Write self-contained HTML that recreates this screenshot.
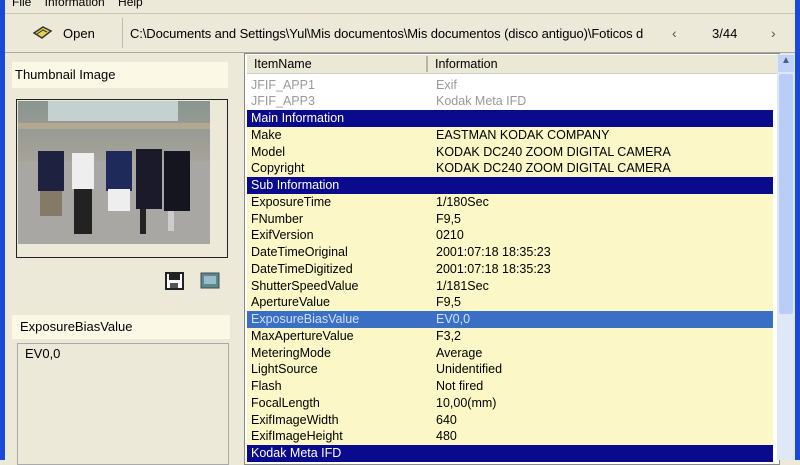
<!DOCTYPE html><html><head><style>
body{margin:0;width:800px;height:460px;overflow:hidden;background:#ece9d8;font-family:"Liberation Sans",sans-serif;font-size:12.5px;position:relative;color:#000}
.a{position:absolute}
.row{position:absolute;left:247px;width:526px;height:16.75px;line-height:16.75px;background:#fbf7c6}
.row span{position:absolute;left:4px}.row b{font-weight:normal;position:absolute;left:189px}
.g{background:#fff;color:#999}
.h{background:#0a0a8c;color:#fff}
.s{background:#3a6fc4;color:#cfe0ff}
</style></head><body>
<div class="a" style="left:0;top:0;width:5px;height:460px;background:#1c48d8"></div>
<div class="a" style="left:795px;top:0;width:5px;height:460px;background:#1c48d8"></div>
<div class="a" style="left:12px;top:-5px;font-size:12px">File &nbsp;&nbsp; Information &nbsp;&nbsp; Help</div>
<div class="a" style="left:5px;top:13px;width:790px;height:1px;background:#c9c5b2"></div>
<div class="a" style="left:5px;top:14px;width:790px;height:38px;background:#ece9d8;border-bottom:1px solid #aca899"></div>
<svg class="a" style="left:31px;top:24px" width="22" height="18"><path d="M3 9 L12 3 L20 7 L11 14 Z" fill="#e6d24a" stroke="#333" stroke-width="1.5"/><path d="M6 10 L12 6 L16 8" fill="none" stroke="#333"/></svg>
<div class="a" style="left:63px;top:26px;font-size:13px">Open</div>
<div class="a" style="left:122px;top:18px;width:1px;height:30px;background:#bbb"></div>
<div class="a" style="left:130px;top:26px;font-size:13px;white-space:nowrap;letter-spacing:-0.1px">C:\Documents and Settings\Yul\Mis documentos\Mis documentos (disco antiguo)\Foticos d</div>
<div class="a" style="left:672px;top:25px;font-size:14px;color:#555">‹</div>
<div class="a" style="left:712px;top:26px;font-size:13px">3/44</div>
<div class="a" style="left:771px;top:25px;font-size:14px;color:#555">›</div>
<div class="a" style="left:12px;top:62px;width:216px;height:26px;background:#fbf8e6"></div>
<div class="a" style="left:15px;top:67px;font-size:13px">Thumbnail Image</div>
<div class="a" style="left:16px;top:99px;width:210px;height:157px;border:1px solid #222;background:#ece9d8"></div>
<svg class="a" style="left:18px;top:101px" width="192" height="143"><defs><linearGradient id="g" x1="0" y1="0" x2="0" y2="1"><stop offset="0" stop-color="#8a9590"/><stop offset=".45" stop-color="#a8a49a"/><stop offset="1" stop-color="#9a9a96"/></linearGradient></defs><rect width="192" height="143" fill="url(#g)"/><rect x="30" y="0" width="130" height="20" fill="#c5d0d0"/><rect x="0" y="22" width="192" height="6" fill="#b5a890"/><rect x="0" y="60" width="192" height="83" fill="#a9a7a3"/>
<rect x="20" y="50" width="26" height="40" fill="#1e2240"/><rect x="22" y="90" width="22" height="25" fill="#857a68"/>
<rect x="54" y="52" width="22" height="36" fill="#eee"/><rect x="56" y="88" width="18" height="45" fill="#222"/>
<rect x="88" y="50" width="26" height="40" fill="#1e2a5a"/><rect x="90" y="88" width="22" height="22" fill="#eee"/>
<rect x="118" y="48" width="26" height="60" fill="#1a1a2a"/><rect x="122" y="108" width="6" height="25" fill="#222"/>
<rect x="146" y="50" width="26" height="60" fill="#15151f"/><rect x="150" y="110" width="6" height="20" fill="#ccc"/></svg>
<svg class="a" style="left:165px;top:272px" width="20" height="18"><rect x="1" y="1" width="17" height="16" fill="#fff" stroke="#222" stroke-width="2"/><rect x="4" y="2" width="11" height="6" fill="#222"/><rect x="5" y="11" width="8" height="5" fill="#555"/></svg>
<svg class="a" style="left:200px;top:272px" width="20" height="17"><rect x="1" y="1" width="18" height="15" fill="#5a8a88" stroke="#445"/><rect x="4" y="4" width="12" height="8" fill="#9bc"/></svg>
<div class="a" style="left:12px;top:315px;width:218px;height:24px;background:#fbf8e6"></div>
<div class="a" style="left:20px;top:319px;font-size:13px">ExposureBiasValue</div>
<div class="a" style="left:17px;top:343px;width:210px;height:120px;border:1px solid #aaa;background:#ece9d8"></div>
<div class="a" style="left:25px;top:346px;font-size:13px">EV0,0</div>
<div class="a" style="left:244px;top:53px;width:534px;height:410px;border:1px solid #888;background:#fff"></div>
<div class="a" style="left:247px;top:55px;width:530px;height:18px;background:#ebe8d5;border-bottom:1px solid #ccc"></div>
<div class="a" style="left:426px;top:56px;width:2px;height:16px;background:#b9b6a2"></div>
<div class="a" style="left:254px;top:57px">ItemName</div>
<div class="a" style="left:435px;top:57px">Information</div>
<div class="a" style="left:777px;top:54px;width:18px;height:406px;background:#dfe8f7"></div>
<div class="a" style="left:778px;top:55px;width:16px;height:17px;background:#c1d3fb;text-align:center;font-size:10px;color:#4d6185">▲</div>
<div class="a" style="left:779px;top:74px;width:14px;height:240px;background:#b8cdf8;border-radius:2px"></div>
<div class="row g" style="top:76.5px"><span>JFIF_APP1</span><b>Exif</b></div>
<div class="row g" style="top:93.25px"><span>JFIF_APP3</span><b>Kodak Meta IFD</b></div>
<div class="row h" style="top:110px"><span>Main Information</span></div>
<div class="row" style="top:126.75px"><span>Make</span><b>EASTMAN KODAK COMPANY</b></div>
<div class="row" style="top:143.5px"><span>Model</span><b>KODAK DC240 ZOOM DIGITAL CAMERA</b></div>
<div class="row" style="top:160.25px"><span>Copyright</span><b>KODAK DC240 ZOOM DIGITAL CAMERA</b></div>
<div class="row h" style="top:177px"><span>Sub Information</span></div>
<div class="row" style="top:193.75px"><span>ExposureTime</span><b>1/180Sec</b></div>
<div class="row" style="top:210.5px"><span>FNumber</span><b>F9,5</b></div>
<div class="row" style="top:227.25px"><span>ExifVersion</span><b>0210</b></div>
<div class="row" style="top:244px"><span>DateTimeOriginal</span><b>2001:07:18 18:35:23</b></div>
<div class="row" style="top:260.75px"><span>DateTimeDigitized</span><b>2001:07:18 18:35:23</b></div>
<div class="row" style="top:277.5px"><span>ShutterSpeedValue</span><b>1/181Sec</b></div>
<div class="row" style="top:294.25px"><span>ApertureValue</span><b>F9,5</b></div>
<div class="row s" style="top:311px"><span>ExposureBiasValue</span><b>EV0,0</b></div>
<div class="row" style="top:327.75px"><span>MaxApertureValue</span><b>F3,2</b></div>
<div class="row" style="top:344.5px"><span>MeteringMode</span><b>Average</b></div>
<div class="row" style="top:361.25px"><span>LightSource</span><b>Unidentified</b></div>
<div class="row" style="top:378px"><span>Flash</span><b>Not fired</b></div>
<div class="row" style="top:394.75px"><span>FocalLength</span><b>10,00(mm)</b></div>
<div class="row" style="top:411.5px"><span>ExifImageWidth</span><b>640</b></div>
<div class="row" style="top:428.25px"><span>ExifImageHeight</span><b>480</b></div>
<div class="row h" style="top:445px"><span>Kodak Meta IFD</span></div>
</body></html>
